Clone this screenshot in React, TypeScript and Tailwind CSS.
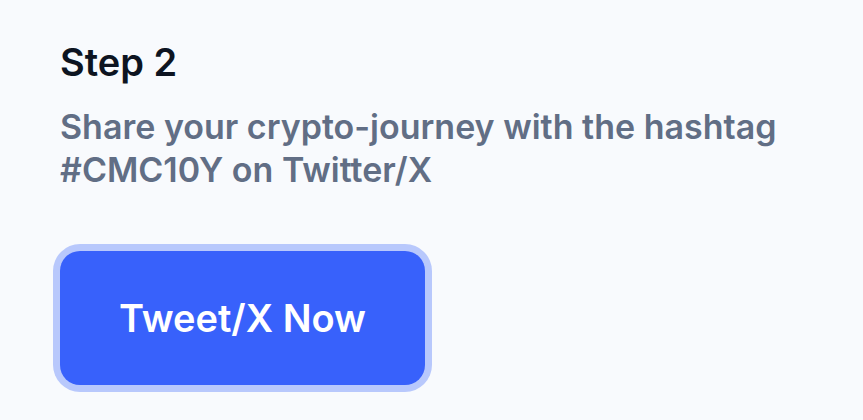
import React from 'react';

export default function App() {
  return (
    <div className="min-h-screen w-full bg-[#f8fafd] px-[60px] pt-[39px]" style={{ fontFamily: 'Inter, "Noto Sans", sans-serif' }}>
      <div className="max-w-[740px]">
        <h2 className="text-[38px] leading-[46px] font-semibold text-[#0d1421]">Step 2</h2>
        <p className="mt-[20px] text-[34px] leading-[43px] font-semibold text-[#616e85]">
          Share your crypto-journey with the hashtag #CMC10Y on Twitter/X
        </p>
        <button className="mt-[60px] flex h-[134px] w-[365px] items-center justify-center rounded-[20px] bg-[#3861fb] text-[38px] font-semibold text-white ring-[7px] ring-[#b8c8fc]">
          Tweet/X Now
        </button>
      </div>
    </div>
  );
}
